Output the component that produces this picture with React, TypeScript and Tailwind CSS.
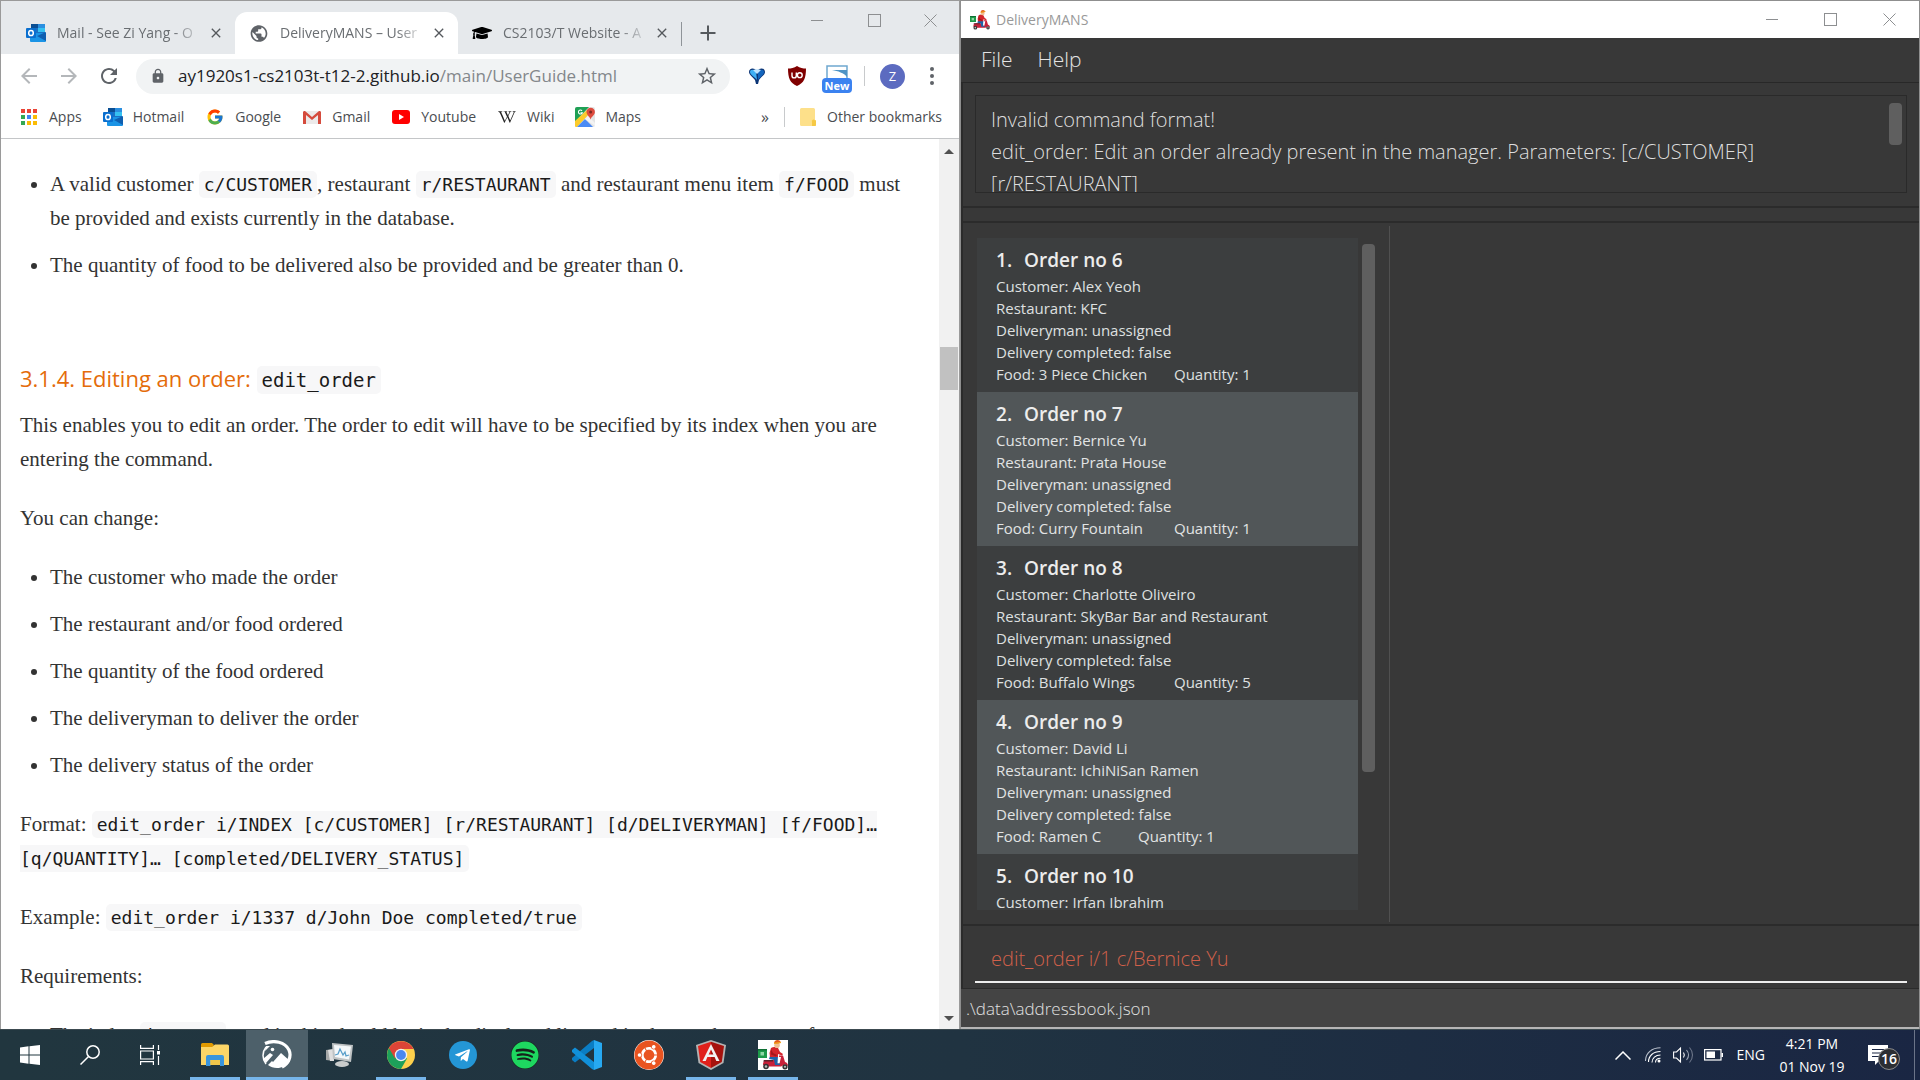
import type { ReactNode } from "react";
import { FaGraduationCap, FaSpotify, FaTelegramPlane, FaUbuntu, FaWikipediaW } from "react-icons/fa";
import { FcGoogle } from "react-icons/fc";
import { MdArrowBack, MdArrowForward, MdClose, MdLock, MdPublic, MdRefresh, MdStarBorder } from "react-icons/md";

/* ---------- Icons ---------- */

function OutlookIcon() {
  return (
    <svg viewBox="0 0 20 18" className="h-[18px] w-5 shrink-0" aria-hidden="true">
      <rect x="5" y="0" width="14" height="12" fill="#1b6fc4" />
      <rect x="5" y="0" width="7" height="4" fill="#0a4f94" />
      <rect x="12" y="0" width="7" height="4" fill="#2b8fe0" />
      <rect x="12" y="4" width="7" height="4" fill="#35c1f1" />
      <path d="M4 9h16v8a1 1 0 0 1-1 1H5a1 1 0 0 1-1-1z" fill="#1a94e6" />
      <path d="M20 8v9l-9-5z" fill="#0f5fb0" />
      <rect x="0" y="4" width="10" height="10" rx="1" fill="#0a6fcf" />
      <ellipse cx="5" cy="9" rx="2.3" ry="2.6" fill="none" stroke="#fff" strokeWidth="1.5" />
    </svg>
  );
}

function AppsIcon() {
  const colors = ["#ea4335", "#ea4335", "#ea4335", "#34a853", "#4285f4", "#fbbc05", "#34a853", "#fbbc05", "#fbbc05"];
  return (
    <svg viewBox="0 0 20 20" className="size-5" aria-hidden="true">
      {colors.map((c, i) => (
        <rect key={i} x={2 + (i % 3) * 6} y={2 + Math.floor(i / 3) * 6} width="4" height="4" fill={c} />
      ))}
    </svg>
  );
}

function GmailIcon() {
  return (
    <svg viewBox="0 0 20 20" className="size-5" aria-hidden="true">
      <path d="M1 4h18v13H1z" fill="#eceaea" />
      <path d="M1 17V5l1-1h1l7 6 7-6h1l1 1v12h-3V8l-6 5-6-5v9z" fill="#d54b3d" />
    </svg>
  );
}

function YoutubeIcon() {
  return (
    <svg viewBox="0 0 20 20" className="size-5" aria-hidden="true">
      <rect x="1" y="3" width="18" height="14" rx="3" fill="#f00" />
      <path d="M8 7l5 3-5 3z" fill="#fff" />
    </svg>
  );
}

function MapsIcon() {
  return (
    <svg viewBox="0 0 20 20" className="size-5" aria-hidden="true">
      <rect width="20" height="20" rx="2" fill="#e4e4e4" />
      <path d="M0 2a2 2 0 0 1 2-2h12L0 15z" fill="#1fa055" />
      <path d="M0 14L12 3l3 3L2 20H1a1 1 0 0 1-1-1z" fill="#fbcb2b" />
      <path d="M2 20l8-8 8 8z" fill="#4a8af4" />
      <path d="M10 12l3-3 7 7v3z" fill="#f3f3f3" />
      <path d="M15.500 13c0-3-4-4.500-4-8a4.200 4.200 0 0 1 8.400 0c0 3.500-4.400 5-4.400 8z" fill="#dd4b3e" />
      <circle cx="15.600" cy="5" r="1.500" fill="#7c2a21" />
      <path d="M7 3.800a2 2 0 1 0 .3 2H5.500" fill="none" stroke="#fff" strokeWidth="1.100" />
    </svg>
  );
}

function FolderIcon() {
  return (
    <svg viewBox="0 0 18 20" className="h-5 w-[18px]" aria-hidden="true">
      <path d="M1 2.500A1.500 1.500 0 0 1 2.500 1h12A1.500 1.500 0 0 1 16 2.500V13h1v5a1 1 0 0 1-1 1H2.500A1.500 1.500 0 0 1 1 17.500z" fill="#fde08a" />
      <path d="M13 19v-4a1.500 1.500 0 0 1 3-1.500h1V18a1 1 0 0 1-1 1z" fill="#f6c944" />
    </svg>
  );
}

function FunnelIcon() {
  return (
    <svg viewBox="0 0 18 18" className="size-[18px]" aria-hidden="true">
      <path d="M1 5C1 1 6 0 9 4c3-4 8-3 8 1 0 3-4 5-6 8l-1 4H8l-1-4C5 10 1 8 1 5z" fill="#0b3576" />
      <path d="M2 5c0-3 4-3 6 0l1 8C7 10 2 8 2 5z" fill="#3fb0f4" />
      <path d="M16 5c0-3-4-3-6 0v8c2-3 6-5 6-8z" fill="#1365bd" />
      <path d="M5 3c2-1 6-1 8 0L9 7z" fill="#bfe5ff" />
    </svg>
  );
}

function UblockIcon() {
  return (
    <svg viewBox="0 0 18 20" className="h-5 w-[18px]" aria-hidden="true">
      <path d="M9 0c3 2 6 2.500 9 2.500C18 12 16 17 9 20 2 17 0 12 0 2.500 3 2.500 6 2 9 0z" fill="#800000" />
      <path d="M4 6.500v3.200a2 2 0 0 0 4.300 0v-3.200" fill="none" stroke="#fff" strokeWidth="1.400" />
      <circle cx="11.800" cy="9.200" r="2.400" fill="none" stroke="#fff" strokeWidth="1.400" />
    </svg>
  );
}

function ScooterIcon({ className }: { className: string }) {
  return (
    <svg viewBox="0 0 30 30" className={className} aria-hidden="true">
      <rect x="0" y="9" width="9" height="9" fill="#1e9a4a" />
      <rect x="2.500" y="12" width="3.500" height="3.500" fill="#8fd8a5" />
      <rect x="0" y="9" width="9" height="1.500" fill="#0f7034" />
      <path d="M5 25c0-4 2-5 5-5h7l1.500 3.500h3L23 17h-2v-1.500h4L27 22c2 .5 3 2 3 4l-3-1.500-4 2H10z" fill="#c8213a" />
      <path d="M6 20h9v1.500H5z" fill="#59222b" />
      <path d="M12 16h8l-.5 7.500H22V25h-5l-1-5-5-1z" fill="#1d63a8" />
      <path d="M13 8c2-1.500 5-1.500 7 0l2 4 3 2-1 1.500-4-1.500v3h-8l-.5-4z" fill="#d3242b" />
      <path d="M13 9l2 4 4 2-1 1.500-5-2z" fill="#a5161d" />
      <circle cx="19" cy="5.200" r="2.800" fill="#f0bd92" />
      <path d="M16 4c0-3 1.500-4 3.500-4S23 1.500 23 3l-7 1z" fill="#e2581c" />
      <path d="M16 2.800l7-.8v1l-7 1z" fill="#f5b020" />
      <circle cx="8" cy="26.500" r="2.800" fill="#333" />
      <circle cx="8" cy="26.500" r="1.200" fill="#bbb" />
      <circle cx="27" cy="26.800" r="2.600" fill="#333" />
      <circle cx="27" cy="26.800" r="1.100" fill="#bbb" />
    </svg>
  );
}

function WindowsLogo() {
  return (
    <svg viewBox="0 0 20 20" className="size-5" aria-hidden="true">
      <path d="M0 2.500L8.500 1.300V9.500H0zM9.500 1.200L20 0v9.500H9.500zM0 10.500h8.500v8.200L0 17.500zM9.500 10.500H20V20L9.500 18.800z" fill="#fff" />
    </svg>
  );
}

function SearchIcon() {
  return (
    <svg viewBox="0 0 20 20" className="size-5" fill="none" stroke="#fff" strokeWidth="1.500" aria-hidden="true">
      <circle cx="13" cy="7" r="6.200" />
      <path d="M8.500 11.500L0.500 19.500" />
    </svg>
  );
}

function TaskViewIcon() {
  return (
    <svg viewBox="0 0 20 20" className="size-5" fill="none" stroke="#fff" strokeWidth="1.200" aria-hidden="true">
      <path d="M0.600 0v3.400h12.800V0M0.600 20v-3.400h12.800V20M0.600 6h12.800v8H0.600zM18.500 0v5M18.500 11v9" />
      <rect x="17" y="6" width="3" height="3.500" fill="#fff" stroke="none" />
    </svg>
  );
}

function ExplorerIcon() {
  return (
    <svg viewBox="0 0 28 24" className="h-6 w-7" aria-hidden="true">
      <path d="M0 1.500A1.500 1.500 0 0 1 1.500 0H11l2 2-2 3H0z" fill="#e19a00" />
      <path d="M0 4h11l3-2.500h12.500A1.500 1.500 0 0 1 28 3v19H0z" fill="#fdd667" />
      <path d="M5 23V14a2 2 0 0 1 2-2h14a2 2 0 0 1 2 2v9h-4v-6H9.500v6z" fill="#3a95dc" />
      <rect x="9.500" y="17" width="9.500" height="5" fill="#f1c64a" />
    </svg>
  );
}

function PhotoEditorIcon() {
  return (
    <svg viewBox="0 0 30 30" className="size-[30px]" aria-hidden="true">
      <path d="M3 3.500C12-.5 23 2 27 10c3 7-1 14-7 17" fill="none" stroke="#fff" strokeWidth="3.200" />
      <path d="M4 7C0 12 0 19 4 24" fill="none" stroke="#fff" strokeWidth="1.500" />
      <path d="M4 6h4l-5 5z" fill="#fff" />
      <path d="M1 19l7-6 3 2-7 8zM6 25l4-4 1 1 8-9 9 8c-5 8-16 9-22 4z" fill="#fff" />
      <circle cx="10.500" cy="9.500" r="1.800" fill="#fff" />
    </svg>
  );
}

function MonitorIcon() {
  return (
    <svg viewBox="0 0 28 26" className="h-[26px] w-7" aria-hidden="true">
      <path d="M1 8l8-1v12l-8-1z" fill="#a5a8a8" />
      <path d="M3 8l6-1v12l-4 0z" fill="#dedede" />
      <ellipse cx="17" cy="22" rx="7" ry="3" fill="#c9cccc" />
      <path d="M7 1l21 2-2 17L8 17z" fill="#bfc3c4" />
      <path d="M9 3l17 1.500-2 13L10 15z" fill="#f4f8fa" />
      <path d="M10 13l3-1 2-5 3 6 2-3 1 4 3-1" fill="none" stroke="#5a9fca" strokeWidth="1.300" />
    </svg>
  );
}

function ChromeIcon() {
  return (
    <svg viewBox="0 0 28 28" className="size-7" aria-hidden="true">
      <circle cx="14" cy="14" r="14" fill="#fdd04c" />
      <path d="M14 14L1.900 7A14 14 0 0 0 14 28l6-10.500z" fill="#1da05a" />
      <path d="M1.900 7A14 14 0 0 1 26.500 8H14l-6 9.500z" fill="#dc4437" />
      <circle cx="14" cy="14" r="6.200" fill="#f1f1f1" />
      <circle cx="14" cy="14" r="4.900" fill="#4a88ee" />
    </svg>
  );
}

function TelegramIcon() {
  return (
    <span className="flex size-7 items-center justify-center rounded-full bg-[#2496d6] pr-0.5 text-white">
      <FaTelegramPlane className="size-[17px]" />
    </span>
  );
}

function SpotifyIcon() {
  return (
    <span className="flex size-7 items-center justify-center rounded-full bg-[#16221a] text-[#1ed760]">
      <FaSpotify className="size-7" />
    </span>
  );
}

function VsCodeIcon() {
  return (
    <svg viewBox="0 0 30 30" className="size-[30px]" aria-hidden="true">
      <path d="M22 8L3 22.500 0 20v-2L20 1l2-1z" fill="#0a7dc4" />
      <path d="M22 22L3 7.500 0 10v2l20 17 2 1z" fill="#1190da" />
      <path d="M22 0l8 3v24l-8 3z" fill="#27a9f2" />
    </svg>
  );
}

function UbuntuIcon() {
  return (
    <span className="flex size-[30px] items-center justify-center rounded-full bg-white text-[#e95420]">
      <FaUbuntu className="size-[30px]" />
    </span>
  );
}

function AngularIcon() {
  return (
    <svg viewBox="0 0 30 30" className="size-[30px]" aria-hidden="true">
      <path d="M15 0l15 5-2.500 18L15 30 2.500 23 0 5z" fill="#b3b3b3" />
      <path d="M15 1.800L28 6l-2.200 16L15 28z" fill="#a6120d" />
      <path d="M15 1.800L2 6l2.200 16L15 28z" fill="#e0201b" />
      <path d="M15 4L6.500 21h3.200l1.700-4h7.200l1.700 4h3.200zm0 5.500l2.400 5h-4.800z" fill="#f2f2f2" fillRule="evenodd" />
    </svg>
  );
}

function WifiIcon() {
  return (
    <svg viewBox="0 0 16 16" className="size-4" fill="none" stroke="#fff" strokeWidth="1.100" aria-hidden="true">
      <path d="M0.500 14C0.500 6 7 0.800 15.500 0.800" stroke="#b8bfcb" />
      <path d="M3.500 15C3.500 9 8 4.500 15.500 4.500" />
      <path d="M7 15.500C7 11 10.500 8 15.500 8" />
      <path d="M10.500 15.500c0-2.500 2-4.300 5-4.300" />
      <circle cx="14" cy="14" r="1.500" fill="#fff" stroke="none" />
    </svg>
  );
}

function SpeakerIcon() {
  return (
    <svg viewBox="0 0 21 18" className="h-[18px] w-[21px]" fill="none" stroke="#fff" strokeWidth="1.100" aria-hidden="true">
      <path d="M0.600 6h2.900l4-4v14l-4-4H0.600z" />
      <path d="M10.500 6.500c1 1.500 1 3.500 0 5" />
      <path d="M13.500 4c2.500 3 2.500 7 0 10" stroke="#9aa3b3" />
      <path d="M16.500 1.500c4 4.500 4 10.500 0 15" stroke="#6c7588" />
    </svg>
  );
}

function BatteryIcon() {
  return (
    <svg viewBox="0 0 19 12" className="h-3 w-[19px]" aria-hidden="true">
      <rect x="0.600" y="0.600" width="16.400" height="10.400" fill="none" stroke="#fff" strokeWidth="1.200" />
      <rect x="2.500" y="2.500" width="8.500" height="6.500" fill="#fff" />
      <rect x="17.500" y="4" width="1.500" height="4" fill="#fff" />
    </svg>
  );
}

/* ---------- Window caption buttons ---------- */

function CaptionButtons({ className }: { className: string }) {
  return (
    <div className={className}>
      <button type="button" aria-label="Minimize" className="flex h-full flex-1 items-center justify-center">
        <span className="h-px w-3 bg-[#8d8f91]" />
      </button>
      <button type="button" aria-label="Maximize" className="flex h-full flex-1 items-center justify-center">
        <span className="size-[13px] border border-[#8d8f91]" />
      </button>
      <button type="button" aria-label="Close" className="flex h-full flex-1 items-center justify-center">
        <svg viewBox="0 0 13 13" className="size-[13px]" stroke="#8d8f91" strokeWidth="1" aria-hidden="true">
          <path d="M0.500 0.500l12 12M12.500 0.500l-12 12" />
        </svg>
      </button>
    </div>
  );
}

/* ---------- Browser ---------- */

function Tab({ icon, title, active = false }: { icon: ReactNode; title: string; active?: boolean }) {
  return (
    <div
      className={
        active
          ? "flex h-[42px] w-[223px] items-center rounded-t-xl bg-white pr-[11px] pl-3.5"
          : "flex h-[42px] w-[223px] items-center pr-[11px] pl-3.5"
      }
    >
      <span className="flex w-5 shrink-0 justify-center">{icon}</span>
      <span className="ml-[11px] w-[146px] overflow-hidden text-sm whitespace-nowrap text-[#6a6e72] [mask-image:linear-gradient(to_right,black_80%,transparent)]">
        {title}
      </span>
      <button type="button" aria-label={`Close ${title}`} className="ml-auto text-[#55595d]">
        <MdClose className="size-4" />
      </button>
    </div>
  );
}

const bookmarks: { label: string; icon: ReactNode }[] = [
  { label: "Apps", icon: <AppsIcon /> },
  { label: "Hotmail", icon: <OutlookIcon /> },
  { label: "Google", icon: <FcGoogle className="size-[18px]" /> },
  { label: "Gmail", icon: <GmailIcon /> },
  { label: "Youtube", icon: <YoutubeIcon /> },
  { label: "Wiki", icon: <FaWikipediaW className="size-[18px] text-[#222]" /> },
  { label: "Maps", icon: <MapsIcon /> },
];

function Code({ children, large = false }: { children: ReactNode; large?: boolean }) {
  return (
    <code
      className={
        large
          ? "rounded-[5px] bg-[#f7f7f8] px-[5px] py-[3px] font-['DejaVu_Sans_Mono',monospace] text-[19px] leading-none font-normal text-[#1a1a1a]"
          : "rounded-[5px] bg-[#f7f7f8] px-[5px] py-[3px] font-['DejaVu_Sans_Mono',monospace] text-[18px] leading-none text-[#1a1a1a]"
      }
    >
      {children}
    </code>
  );
}

const changes = [
  "The customer who made the order",
  "The restaurant and/or food ordered",
  "The quantity of the food ordered",
  "The deliveryman to deliver the order",
  "The delivery status of the order",
];

function GuidePage() {
  return (
    <article className="min-w-0 flex-1 overflow-hidden bg-white pt-7 pr-5 pl-[19px] font-['Liberation_Serif',serif] text-[21px] leading-[34px] text-[#333]">
      <ul className="ml-[30px] list-disc space-y-[13px]">
        <li>
          A valid customer <Code>c/CUSTOMER</Code>, restaurant <Code>r/RESTAURANT</Code> and restaurant menu item{" "}
          <Code>f/FOOD</Code> must be provided and exists currently in the database.
        </li>
        <li>The quantity of food to be delivered also be provided and be greater than 0.</li>
      </ul>
      <h4 className="mt-[79px] mb-[13px] font-['Open_Sans',sans-serif] text-[22px] leading-[34px] font-normal text-[#e46c0a]">
        3.1.4. Editing an order: <Code large>edit_order</Code>
      </h4>
      <div className="space-y-[25px]">
        <p>
          This enables you to edit an order. The order to edit will have to be specified by its index when you are
          entering the command.
        </p>
        <p>You can change:</p>
        <ul className="ml-[30px] list-disc space-y-[13px]">
          {changes.map((c) => (
            <li key={c}>{c}</li>
          ))}
        </ul>
        <p>
          Format:{" "}
          <Code>
            edit_order i/INDEX [c/CUSTOMER] [r/RESTAURANT] [d/DELIVERYMAN] [f/FOOD]…
            <br />
            [q/QUANTITY]… [completed/DELIVERY_STATUS]
          </Code>
        </p>
        <p>
          Example: <Code>edit_order i/1337 d/John Doe completed/true</Code>
        </p>
        <p>Requirements:</p>
        <ul className="ml-[30px] list-disc">
          <li className="whitespace-nowrap">
            The index <Code>i/INDEX</Code> used in this should be in the displayed list and in the number range of any
          </li>
        </ul>
      </div>
    </article>
  );
}

function Browser() {
  return (
    <section className="flex min-w-0 flex-1 flex-col border-t border-r border-l border-[#9a9a9a] bg-white font-['Open_Sans','Noto_Sans',sans-serif]">
      <div className="flex h-[53px] shrink-0 items-end bg-[#e6e9ec] pl-[11px]">
        <Tab icon={<OutlookIcon />} title="Mail - See Zi Yang - O" />
        <Tab active icon={<MdPublic className="size-[21px] text-[#5f6368]" />} title="DeliveryMANS – User" />
        <Tab icon={<FaGraduationCap className="size-5 text-black" />} title="CS2103/T Website - A" />
        <div className="mb-2 h-6 w-px bg-[#8f9499]" />
        <button type="button" aria-label="New tab" className="ml-[18px] flex h-[42px] items-center">
          <svg viewBox="0 0 16 16" className="size-4" stroke="#55595d" strokeWidth="2" aria-hidden="true">
            <path d="M8 0.500v15M0.500 8h15" />
          </svg>
        </button>
        <CaptionButtons className="mb-3.5 ml-auto flex h-10 w-[170px]" />
      </div>

      <div className="flex h-11 shrink-0 items-center pr-[25px] pl-4 text-[#5f6368]">
        <button type="button" aria-label="Back" className="mr-4 text-[#b4b7ba]">
          <MdArrowBack className="size-6" />
        </button>
        <button type="button" aria-label="Forward" className="mr-4 text-[#b4b7ba]">
          <MdArrowForward className="size-6" />
        </button>
        <button type="button" aria-label="Reload" className="mr-[15px]">
          <MdRefresh className="size-6" />
        </button>
        <div className="flex h-[35px] min-w-0 flex-1 items-center rounded-full bg-[#f1f3f4] pr-3 pl-3.5">
          <MdLock className="size-4 shrink-0" />
          <a href="#address" className="ml-3 flex-1 truncate text-[17px] text-[#83878b]">
            <span className="text-[#202124]">ay1920s1-cs2103t-t12-2.github.io</span>/main/UserGuide.html
          </a>
          <button type="button" aria-label="Bookmark this page">
            <MdStarBorder className="size-[22px]" />
          </button>
        </div>
        <button type="button" aria-label="Filter extension" className="ml-[18px]">
          <FunnelIcon />
        </button>
        <button type="button" aria-label="Ad blocker" className="ml-[22px]">
          <UblockIcon />
        </button>
        <button type="button" aria-label="Screen capture" className="ml-4 flex w-[30px] flex-col items-center pt-1.5">
          <svg viewBox="0 0 22 13" className="h-[13px] w-[22px]" aria-hidden="true">
            <path d="M1 13V1h20v12" fill="#fff" stroke="#6fa8d0" strokeWidth="1.500" />
            <path d="M6 5h15v7C18 8 12 6 6 5z" fill="#4f94c6" />
          </svg>
          <span className="w-full rounded-sm bg-[#3b82f0] text-center text-[11px] leading-[15px] font-bold text-white">
            New
          </span>
        </button>
        <div className="ml-3 h-5 w-px bg-[#c8cacc]" />
        <button
          type="button"
          aria-label="Profile"
          className="ml-[15px] size-[25px] rounded-full bg-[#5c6bc0] text-center text-[13px] leading-[25px] text-white"
        >
          Z
        </button>
        <button type="button" aria-label="Menu" className="ml-[25px] flex flex-col gap-[3px]">
          <span className="size-1 rounded-full bg-[#5f6368]" />
          <span className="size-1 rounded-full bg-[#5f6368]" />
          <span className="size-1 rounded-full bg-[#5f6368]" />
        </button>
      </div>

      <nav className="flex h-[41px] shrink-0 items-center border-b border-[#c4c6c8] pr-[17px] pb-0.5 pl-[18px] text-sm text-[#4a4d51]">
        <div className="flex flex-1 items-center gap-[21px]">
          {bookmarks.map((b) => (
            <a key={b.label} href={`#${b.label}`} className="flex items-center gap-2.5">
              <span className="flex w-5 justify-center">{b.icon}</span>
              {b.label}
            </a>
          ))}
        </div>
        <button type="button" aria-label="More bookmarks" className="mr-[15px] text-base">
          »
        </button>
        <div className="mr-3.5 h-5 w-px bg-[#c8cacc]" />
        <a href="#other" className="flex items-center gap-2.5">
          <FolderIcon />
          Other bookmarks
        </a>
      </nav>

      <div className="flex min-h-0 flex-1">
        <GuidePage />
        <div className="flex w-5 shrink-0 flex-col items-center bg-[#f1f1f1] pt-2.5 pb-2">
          <svg viewBox="0 0 10 5" className="h-[5px] w-2.5" aria-hidden="true">
            <path d="M5 0l5 5H0z" fill="#505050" />
          </svg>
          <div className="mt-[193px] h-[43px] w-[18px] bg-[#c1c1c1]" />
          <svg viewBox="0 0 10 5" className="mt-auto h-[5px] w-2.5" aria-hidden="true">
            <path d="M0 0h10L5 5z" fill="#505050" />
          </svg>
        </div>
      </div>
    </section>
  );
}

/* ---------- DeliveryMANS ---------- */

type Order = {
  no: number;
  customer: string;
  details?: { restaurant: string; food: string; quantity: number; narrow?: boolean };
};

const orders: Order[] = [
  { no: 6, customer: "Alex Yeoh", details: { restaurant: "KFC", food: "3 Piece Chicken", quantity: 1 } },
  { no: 7, customer: "Bernice Yu", details: { restaurant: "Prata House", food: "Curry Fountain", quantity: 1 } },
  {
    no: 8,
    customer: "Charlotte Oliveiro",
    details: { restaurant: "SkyBar Bar and Restaurant", food: "Buffalo Wings", quantity: 5 },
  },
  { no: 9, customer: "David Li", details: { restaurant: "IchiNiSan Ramen", food: "Ramen C", quantity: 1, narrow: true } },
  { no: 10, customer: "Irfan Ibrahim" },
];

function OrderCard({ order, index }: { order: Order; index: number }) {
  const { details } = order;
  return (
    <li
      className={
        index % 2 === 0
          ? "bg-[#3c3e3f] px-[19px] py-[7px] text-[15px] leading-[22px] text-[#dfe0e0]"
          : "bg-[#515658] px-[19px] py-[7px] text-[15px] leading-[22px] text-[#e2e4e4]"
      }
    >
      <h2 className="flex gap-3 text-[19px] leading-[30px] font-semibold text-[#ececec]">
        <span>{index + 1}.</span>
        <span>Order no {order.no}</span>
      </h2>
      <p>Customer: {order.customer}</p>
      {details && (
        <>
          <p>Restaurant: {details.restaurant}</p>
          <p>Deliveryman: unassigned</p>
          <p>Delivery completed: false</p>
          <p className="flex">
            <span className={details.narrow ? "w-[142px]" : "w-[178px]"}>Food: {details.food}</span>
            <span>Quantity: {details.quantity}</span>
          </p>
        </>
      )}
    </li>
  );
}

function DeliveryApp() {
  return (
    <section className="flex min-w-0 flex-1 flex-col border-t border-r border-l border-[#8f8f8f] bg-[#383838] font-['Open_Sans','Noto_Sans',sans-serif]">
      <header className="flex h-[37px] shrink-0 items-center bg-white pl-[9px]">
        <ScooterIcon className="size-5" />
        <h1 className="ml-1.5 text-sm text-[#999]">DeliveryMANS</h1>
        <CaptionButtons className="ml-auto flex h-full w-[177px]" />
      </header>

      <nav className="flex h-[45px] shrink-0 items-center gap-[25px] border-b border-[#282828] pl-5 text-[21px] font-light text-[#e4e4e4]">
        <button type="button">File</button>
        <button type="button">Help</button>
      </nav>

      <div className="shrink-0 border-b-2 border-l-2 border-[#2b2b2b] pt-3 pr-3 pb-[13px] pl-3">
        <div className="flex h-[98px] justify-between overflow-hidden border border-[#2a2a2a] pr-1 pl-[15px]">
          <output className="pt-2 text-[20px] leading-8 font-light text-[#dedede]">
            Invalid command format!
            <br />
            edit_order: Edit an order already present in the manager. Parameters: [c/CUSTOMER]
            <br />
            [r/RESTAURANT]
          </output>
          <div className="mt-[7px] h-[42px] w-[13px] shrink-0 rounded bg-[#5f5f5f]" />
        </div>
      </div>
      <div className="h-[15px] shrink-0 border-b-2 border-l-2 border-[#2b2b2b]" />

      <div className="flex min-h-0 flex-1 border-b-2 border-l-2 border-[#2b2b2b] pt-[3px] pb-0.5">
        <div className="flex w-[427px] shrink-0 border-r border-[#505050] pt-3 pb-3 pl-3.5">
          <ol className="w-[381px] overflow-hidden">
            {orders.map((o, i) => (
              <OrderCard key={o.no} order={o} index={i} />
            ))}
          </ol>
          <div className="mt-1.5 ml-1 h-[528px] w-[13px] rounded bg-[#5f5f5f]" />
        </div>
        <div className="flex-1" />
      </div>

      <div className="h-[63px] shrink-0 border-b border-l-2 border-[#2b2b2b] pr-3 pl-3">
        <input
          type="text"
          aria-label="Command"
          defaultValue="edit_order i/1 c/Bernice Yu"
          className="mt-1.5 h-[51px] w-full border-b-2 border-[#ededed] bg-transparent pt-1 pl-4 text-[20px] font-light text-[#d0604a] outline-none"
        />
      </div>
      <footer className="flex h-10 shrink-0 items-center border-b-2 border-[#b5b5b5] bg-[#444] pt-0.5 pl-[5px] text-[17px] font-light text-[#e0e0e0]">
        .\data\addressbook.json
      </footer>
    </section>
  );
}

/* ---------- Taskbar ---------- */

const taskbarApps: { label: string; icon: ReactNode; state: "idle" | "open" | "active" }[] = [
  { label: "File Explorer", icon: <ExplorerIcon />, state: "open" },
  { label: "Photo editor", icon: <PhotoEditorIcon />, state: "active" },
  { label: "Resource Monitor", icon: <MonitorIcon />, state: "idle" },
  { label: "Chrome", icon: <ChromeIcon />, state: "open" },
  { label: "Telegram", icon: <TelegramIcon />, state: "idle" },
  { label: "Spotify", icon: <SpotifyIcon />, state: "idle" },
  { label: "Visual Studio Code", icon: <VsCodeIcon />, state: "idle" },
  { label: "Ubuntu", icon: <UbuntuIcon />, state: "idle" },
  { label: "Angular", icon: <AngularIcon />, state: "open" },
  {
    label: "DeliveryMANS",
    icon: (
      <span className="bg-white">
        <ScooterIcon className="size-[30px]" />
      </span>
    ),
    state: "open",
  },
];

const taskbarStyles = {
  idle: "flex h-full w-[62px] items-center justify-center",
  open: "relative flex h-full w-[62px] items-center justify-center after:absolute after:inset-x-1.5 after:bottom-0 after:h-[3px] after:bg-[#76b5ea]",
  active:
    "relative flex h-full w-[62px] items-center justify-center bg-[#4d606a] after:absolute after:inset-x-0 after:bottom-0 after:h-[3px] after:bg-[#76b5ea]",
};

function Taskbar() {
  return (
    <footer className="flex h-[51px] shrink-0 items-center border-t border-[#3c4a50] bg-linear-to-r from-[#21363f] via-[#203341] via-50% to-[#1a2643] font-['Open_Sans','Noto_Sans',sans-serif] text-white">
      <button type="button" aria-label="Start" className="flex h-full w-[60px] items-center justify-center">
        <WindowsLogo />
      </button>
      <button type="button" aria-label="Search" className="flex h-full w-[60px] items-center justify-center">
        <SearchIcon />
      </button>
      <button type="button" aria-label="Task view" className="mr-1 flex h-full w-[60px] items-center justify-center">
        <TaskViewIcon />
      </button>
      {taskbarApps.map((a) => (
        <button key={a.label} type="button" aria-label={a.label} className={taskbarStyles[a.state]}>
          {a.icon}
        </button>
      ))}
      <div className="ml-auto flex h-full items-center">
        <svg viewBox="0 0 16 9" className="mr-3.5 h-[9px] w-4" fill="none" stroke="#fff" strokeWidth="1.500" aria-hidden="true">
          <path d="M0.500 8.500L8 1l7.500 7.500" />
        </svg>
        <WifiIcon />
        <span className="ml-3">
          <SpeakerIcon />
        </span>
        <span className="ml-2.5">
          <BatteryIcon />
        </span>
        <span className="ml-3.5 text-sm">ENG</span>
        <time className="ml-3 w-[70px] text-center text-sm leading-[23px] whitespace-nowrap">
          4:21 PM
          <br />
          01 Nov 19
        </time>
        <button type="button" aria-label="16 notifications" className="relative ml-[21px] h-[30px] w-8">
          <svg viewBox="0 0 20 20" className="size-5" aria-hidden="true">
            <path d="M0 0h20v16h-9l-4 4v-4H0z" fill="#fff" />
            <path d="M4 4.500h12M4 8h12M4 11.500h12" stroke="#1a2643" strokeWidth="1.200" />
          </svg>
          <span className="absolute right-0 bottom-0 size-[22px] rounded-full border border-[#8a8a8a] bg-[#2c2e33] text-center text-sm leading-5 font-semibold">
            16
          </span>
        </button>
        <div className="ml-3.5 h-full w-px bg-[#6b7488]" />
        <div className="w-[5px]" />
      </div>
    </footer>
  );
}

export default function App() {
  return (
    <div className="flex h-screen w-full flex-col overflow-hidden">
      <main className="flex min-h-0 flex-1">
        <Browser />
        <DeliveryApp />
      </main>
      <Taskbar />
    </div>
  );
}
